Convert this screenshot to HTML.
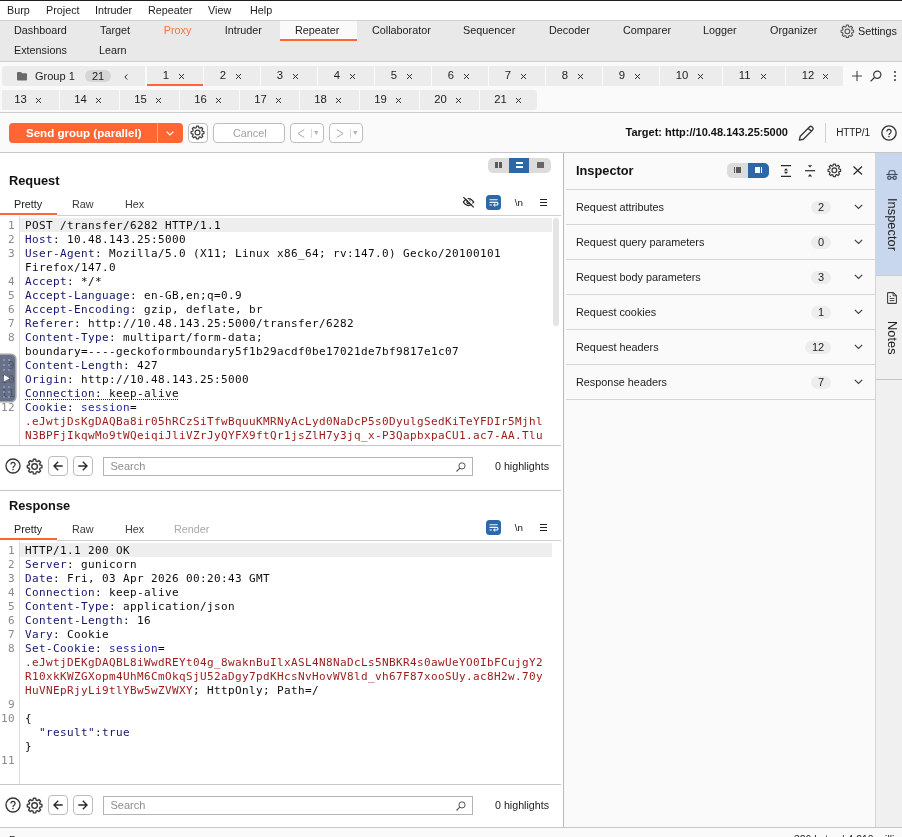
<!DOCTYPE html>
<html lang="en"><head><meta charset="utf-8"><title>Burp Suite Professional - Repeater</title>
<style>
html,body{margin:0;padding:0}
body{width:902px;height:837px;overflow:hidden;position:relative;will-change:transform;background:#fafafa;font-family:"Liberation Sans",sans-serif;font-size:10.8px;color:#1c1c1c}
.a{position:absolute}
.t{position:absolute;white-space:nowrap;line-height:14px;height:14px}
.b{font-weight:bold}
.hd{position:absolute;white-space:nowrap;font-weight:bold;font-size:12.8px;line-height:16px;color:#111}
.ln{position:absolute;background:#c6c6c6}
.stab{position:absolute;background:#ececec;height:20px}
.x{position:absolute;width:7px;height:7px}
.btn{position:absolute;box-sizing:border-box;border:1px solid #bdbdbd;border-radius:4px;background:#fff}
.mono{font-family:"DejaVu Sans Mono","Liberation Mono",monospace;font-size:11px;letter-spacing:0.377px;line-height:14px;white-space:pre;position:absolute;color:#0c0c0c}
.num{font-family:"DejaVu Sans Mono","Liberation Mono",monospace;font-size:11px;letter-spacing:0.377px;line-height:14px;position:absolute;left:0;width:15px;text-align:right;color:#8a8a8a}
.hn{color:#14146c}
.cv{color:#9a1919}
.pn{color:#2424a6}
.pill{position:absolute;background:#ededed;border-radius:7px;height:13px;line-height:13px;text-align:center}
svg{position:absolute;overflow:visible}
</style></head>
<body>
<div class="a" style="left:0px;top:1px;width:902px;height:19px;background:#ffffff;"></div>
<div class="a" style="left:0px;top:0px;width:902px;height:1px;background:#1f1f1f;"></div>
<div class="t " style="left:7px;top:2.5px;">Burp</div>
<div class="t " style="left:46px;top:2.5px;">Project</div>
<div class="t " style="left:95px;top:2.5px;">Intruder</div>
<div class="t " style="left:148px;top:2.5px;">Repeater</div>
<div class="t " style="left:208px;top:2.5px;">View</div>
<div class="t " style="left:250px;top:2.5px;">Help</div>
<div class="a" style="left:0px;top:20px;width:902px;height:41px;background:#e9e9e9;"></div>
<div class="a" style="left:0px;top:20px;width:902px;height:1px;background:#d2d2d2;"></div>
<div class="a" style="left:0px;top:61px;width:902px;height:1px;background:#cecece;"></div>
<div class="a" style="left:280px;top:21px;width:77px;height:19px;background:#fafafa;"></div>
<div class="a" style="left:280px;top:39px;width:77px;height:2px;background:#ff6633;"></div>
<div class="t " style="left:14px;top:22.5px;">Dashboard</div>
<div class="t " style="left:100px;top:22.5px;">Target</div>
<div class="t " style="left:163.7px;top:22.5px;color:#f7733f">Proxy</div>
<div class="t " style="left:224.7px;top:22.5px;">Intruder</div>
<div class="t " style="left:295px;top:22.5px;">Repeater</div>
<div class="t " style="left:372px;top:22.5px;">Collaborator</div>
<div class="t " style="left:463px;top:22.5px;">Sequencer</div>
<div class="t " style="left:549px;top:22.5px;">Decoder</div>
<div class="t " style="left:623px;top:22.5px;">Comparer</div>
<div class="t " style="left:703px;top:22.5px;">Logger</div>
<div class="t " style="left:770px;top:22.5px;">Organizer</div>
<div class="t " style="left:14px;top:42.5px;">Extensions</div>
<div class="t " style="left:99px;top:42.5px;">Learn</div>
<div class="t " style="left:858px;top:24px;">Settings</div>
<svg style="left:839.65px;top:23.85px" width="14.71" height="14.71" viewBox="0 0 16 16"><path d="M6.9 1.2h2.2l.35 1.75 1.1.46 1.5-1 1.55 1.55-1 1.5.46 1.1 1.75.35v2.2l-1.75.35-.46 1.1 1 1.5-1.55 1.55-1.5-1-1.1.46-.35 1.75H6.9l-.35-1.75-1.1-.46-1.5 1L2.4 12.1l1-1.5-.46-1.1L1.2 9.1V6.900l1.750-.350.460-1.100-1-1.500L3.950 2.400l1.500 1 1.100-.460z" fill="none" stroke="#4a4a4a" stroke-width="1.09" stroke-linejoin="round"/><circle cx="8" cy="8" r="2.6" fill="none" stroke="#4a4a4a" stroke-width="1.09"/></svg>
<div class="stab" style="left:2px;top:66px;width:143px;border-radius:4px 0 0 4px"></div>
<svg style="left:17px;top:72px" width="10" height="8.6" viewBox="0 0 10 8.6"><path d="M0 1Q0 0 1 0H3.600Q4.200 0 4.600 0.500L5.100 1.200H9Q10 1.200 10 2.200V7.600Q10 8.600 9 8.600H1Q0 8.600 0 7.600z" fill="#6a6a6a"/></svg>
<div class="t " style="left:35px;top:69px;font-size:11px">Group 1</div>
<div class="pill" style="left:85px;top:70px;width:26px;height:12px;line-height:12px;background:#d6d6d6;font-size:11px">21</div>
<svg style="left:124px;top:73.5px" width="4" height="6" viewBox="0 0 4 6"><path d="M3.300 0.500L0.800 3l2.500 2.500" fill="none" stroke="#2a2a2a" stroke-width="1"/></svg>
<div class="stab" style="left:147px;top:66px;width:56px;"></div>
<div class="a" style="left:147px;top:84px;width:56px;height:2px;background:#ff6633;"></div>
<div class="t " style="left:162.7px;top:68px;font-size:11.3px">1</div>
<svg class="x" style="left:178.0px;top:73.0px" width="7" height="7" viewBox="0 0 7 7"><path d="M1 1L6 6M6 1L1 6" stroke="#262626" stroke-width="0.95" fill="none"/></svg>
<div class="stab" style="left:204px;top:66px;width:56px;"></div>
<div class="t " style="left:219.7px;top:68px;font-size:11.3px">2</div>
<svg class="x" style="left:235.0px;top:73.0px" width="7" height="7" viewBox="0 0 7 7"><path d="M1 1L6 6M6 1L1 6" stroke="#262626" stroke-width="0.95" fill="none"/></svg>
<div class="stab" style="left:261px;top:66px;width:56px;"></div>
<div class="t " style="left:276.7px;top:68px;font-size:11.3px">3</div>
<svg class="x" style="left:292.0px;top:73.0px" width="7" height="7" viewBox="0 0 7 7"><path d="M1 1L6 6M6 1L1 6" stroke="#262626" stroke-width="0.95" fill="none"/></svg>
<div class="stab" style="left:318px;top:66px;width:56px;"></div>
<div class="t " style="left:333.7px;top:68px;font-size:11.3px">4</div>
<svg class="x" style="left:349.0px;top:73.0px" width="7" height="7" viewBox="0 0 7 7"><path d="M1 1L6 6M6 1L1 6" stroke="#262626" stroke-width="0.95" fill="none"/></svg>
<div class="stab" style="left:375px;top:66px;width:56px;"></div>
<div class="t " style="left:390.7px;top:68px;font-size:11.3px">5</div>
<svg class="x" style="left:406.0px;top:73.0px" width="7" height="7" viewBox="0 0 7 7"><path d="M1 1L6 6M6 1L1 6" stroke="#262626" stroke-width="0.95" fill="none"/></svg>
<div class="stab" style="left:432px;top:66px;width:56px;"></div>
<div class="t " style="left:447.7px;top:68px;font-size:11.3px">6</div>
<svg class="x" style="left:463.0px;top:73.0px" width="7" height="7" viewBox="0 0 7 7"><path d="M1 1L6 6M6 1L1 6" stroke="#262626" stroke-width="0.95" fill="none"/></svg>
<div class="stab" style="left:489px;top:66px;width:56px;"></div>
<div class="t " style="left:504.7px;top:68px;font-size:11.3px">7</div>
<svg class="x" style="left:520.0px;top:73.0px" width="7" height="7" viewBox="0 0 7 7"><path d="M1 1L6 6M6 1L1 6" stroke="#262626" stroke-width="0.95" fill="none"/></svg>
<div class="stab" style="left:546px;top:66px;width:56px;"></div>
<div class="t " style="left:561.7px;top:68px;font-size:11.3px">8</div>
<svg class="x" style="left:577.0px;top:73.0px" width="7" height="7" viewBox="0 0 7 7"><path d="M1 1L6 6M6 1L1 6" stroke="#262626" stroke-width="0.95" fill="none"/></svg>
<div class="stab" style="left:603px;top:66px;width:56px;"></div>
<div class="t " style="left:618.7px;top:68px;font-size:11.3px">9</div>
<svg class="x" style="left:634.0px;top:73.0px" width="7" height="7" viewBox="0 0 7 7"><path d="M1 1L6 6M6 1L1 6" stroke="#262626" stroke-width="0.95" fill="none"/></svg>
<div class="stab" style="left:660px;top:66px;width:62px;"></div>
<div class="t " style="left:675.7px;top:68px;font-size:11.3px">10</div>
<svg class="x" style="left:697.0px;top:73.0px" width="7" height="7" viewBox="0 0 7 7"><path d="M1 1L6 6M6 1L1 6" stroke="#262626" stroke-width="0.95" fill="none"/></svg>
<div class="stab" style="left:723px;top:66px;width:62px;"></div>
<div class="t " style="left:738.7px;top:68px;font-size:11.3px">11</div>
<svg class="x" style="left:760.0px;top:73.0px" width="7" height="7" viewBox="0 0 7 7"><path d="M1 1L6 6M6 1L1 6" stroke="#262626" stroke-width="0.95" fill="none"/></svg>
<div class="stab" style="left:786px;top:66px;width:57px;"></div>
<div class="t " style="left:801.7px;top:68px;font-size:11.3px">12</div>
<svg class="x" style="left:822.0px;top:73.0px" width="7" height="7" viewBox="0 0 7 7"><path d="M1 1L6 6M6 1L1 6" stroke="#262626" stroke-width="0.95" fill="none"/></svg>
<div class="stab" style="left:2px;top:90px;width:56.5px;height:19.5px;"></div>
<div class="t " style="left:14.3px;top:92px;font-size:11.3px">13</div>
<svg class="x" style="left:35.0px;top:97.0px" width="7" height="7" viewBox="0 0 7 7"><path d="M1 1L6 6M6 1L1 6" stroke="#262626" stroke-width="0.95" fill="none"/></svg>
<div class="stab" style="left:59.5px;top:90px;width:59.0px;height:19.5px;"></div>
<div class="t " style="left:74.3px;top:92px;font-size:11.3px">14</div>
<svg class="x" style="left:95.0px;top:97.0px" width="7" height="7" viewBox="0 0 7 7"><path d="M1 1L6 6M6 1L1 6" stroke="#262626" stroke-width="0.95" fill="none"/></svg>
<div class="stab" style="left:119.5px;top:90px;width:59.0px;height:19.5px;"></div>
<div class="t " style="left:134.3px;top:92px;font-size:11.3px">15</div>
<svg class="x" style="left:155.0px;top:97.0px" width="7" height="7" viewBox="0 0 7 7"><path d="M1 1L6 6M6 1L1 6" stroke="#262626" stroke-width="0.95" fill="none"/></svg>
<div class="stab" style="left:179.5px;top:90px;width:59.0px;height:19.5px;"></div>
<div class="t " style="left:194.3px;top:92px;font-size:11.3px">16</div>
<svg class="x" style="left:215.0px;top:97.0px" width="7" height="7" viewBox="0 0 7 7"><path d="M1 1L6 6M6 1L1 6" stroke="#262626" stroke-width="0.95" fill="none"/></svg>
<div class="stab" style="left:239.5px;top:90px;width:59.0px;height:19.5px;"></div>
<div class="t " style="left:254.3px;top:92px;font-size:11.3px">17</div>
<svg class="x" style="left:275.0px;top:97.0px" width="7" height="7" viewBox="0 0 7 7"><path d="M1 1L6 6M6 1L1 6" stroke="#262626" stroke-width="0.95" fill="none"/></svg>
<div class="stab" style="left:299.5px;top:90px;width:59.0px;height:19.5px;"></div>
<div class="t " style="left:314.3px;top:92px;font-size:11.3px">18</div>
<svg class="x" style="left:335.0px;top:97.0px" width="7" height="7" viewBox="0 0 7 7"><path d="M1 1L6 6M6 1L1 6" stroke="#262626" stroke-width="0.95" fill="none"/></svg>
<div class="stab" style="left:359.5px;top:90px;width:59.0px;height:19.5px;"></div>
<div class="t " style="left:374.3px;top:92px;font-size:11.3px">19</div>
<svg class="x" style="left:395.0px;top:97.0px" width="7" height="7" viewBox="0 0 7 7"><path d="M1 1L6 6M6 1L1 6" stroke="#262626" stroke-width="0.95" fill="none"/></svg>
<div class="stab" style="left:419.5px;top:90px;width:59.0px;height:19.5px;"></div>
<div class="t " style="left:434.3px;top:92px;font-size:11.3px">20</div>
<svg class="x" style="left:455.0px;top:97.0px" width="7" height="7" viewBox="0 0 7 7"><path d="M1 1L6 6M6 1L1 6" stroke="#262626" stroke-width="0.95" fill="none"/></svg>
<div class="stab" style="left:479.5px;top:90px;width:57.5px;height:19.5px;border-radius:0 4px 4px 0"></div>
<div class="t " style="left:494.3px;top:92px;font-size:11.3px">21</div>
<svg class="x" style="left:515.0px;top:97.0px" width="7" height="7" viewBox="0 0 7 7"><path d="M1 1L6 6M6 1L1 6" stroke="#262626" stroke-width="0.95" fill="none"/></svg>
<svg style="left:852px;top:71px" width="10" height="10" viewBox="0 0 10 10"><path d="M5 0v10M0 5h10" stroke="#444" stroke-width="1.1"/></svg>
<svg style="left:870px;top:70px" width="12" height="12" viewBox="0 0 12 12"><circle cx="7.3" cy="4.7" r="3.6" fill="none" stroke="#3a3a3a" stroke-width="1.2"/><path d="M4.7 7.3L0.6 11.4" stroke="#3a3a3a" stroke-width="1.3"/></svg>
<div class="a" style="left:894px;top:71px;width:2px;height:2px;background:#3a3a3a;border-radius:1px"></div>
<div class="a" style="left:894px;top:75px;width:2px;height:2px;background:#3a3a3a;border-radius:1px"></div>
<div class="a" style="left:894px;top:79px;width:2px;height:2px;background:#3a3a3a;border-radius:1px"></div>
<div class="a" style="left:0px;top:112px;width:902px;height:1px;background:#cdcdcd;"></div>
<div class="a" style="left:9px;top:123px;width:174px;height:20px;background:#ff6633;border-radius:4px"></div>
<div class="a" style="left:157px;top:123px;width:1px;height:20px;background:rgba(255,255,255,.38);"></div>
<div class="t b" style="left:26px;top:126px;color:#fff;font-size:11.55px">Send group (parallel)</div>
<svg style="left:166px;top:131px" width="8" height="5" viewBox="0 0 8 5"><path d="M0.7 0.7L4 4 7.3 0.7" fill="none" stroke="#fff" stroke-width="1.2"/></svg>
<div class="btn" style="left:188px;top:123px;width:20px;height:20px"></div>
<svg style="left:190.47px;top:125.47px" width="15.06" height="15.06" viewBox="0 0 16 16"><path d="M6.9 1.2h2.2l.35 1.75 1.1.46 1.5-1 1.55 1.55-1 1.5.46 1.1 1.75.35v2.2l-1.75.35-.46 1.1 1 1.5-1.55 1.55-1.5-1-1.1.46-.35 1.75H6.9l-.35-1.75-1.1-.46-1.5 1L2.4 12.1l1-1.5-.46-1.1L1.2 9.1V6.900l1.750-.350.460-1.100-1-1.500L3.950 2.400l1.500 1 1.100-.460z" fill="none" stroke="#3a3a3a" stroke-width="1.27" stroke-linejoin="round"/><circle cx="8" cy="8" r="2.6" fill="none" stroke="#3a3a3a" stroke-width="1.27"/></svg>
<div class="btn" style="left:213px;top:123px;width:72px;height:20px"></div>
<div class="t " style="left:233px;top:126px;color:#a2a2a2;font-size:10.8px">Cancel</div>
<div class="btn" style="left:290px;top:123px;width:33.5px;height:20px"></div>
<svg style="left:297px;top:128.5px" width="8" height="9" viewBox="0 0 8 9"><path d="M7.300 0.500L0.900 4.500 7.300 8.500" fill="none" stroke="#aaa" stroke-width="1"/></svg>
<div class="a" style="left:311px;top:128.5px;width:1px;height:9px;background:#d8d8d8;"></div>
<svg style="left:314.2px;top:131px" width="4.500" height="4" viewBox="0 0 4.500 4"><path d="M0 0h4.500L2.250 4z" fill="#b4b4b4"/></svg>
<div class="btn" style="left:329px;top:123px;width:33.5px;height:20px"></div>
<svg style="left:336px;top:128.5px" width="8" height="9" viewBox="0 0 8 9"><path d="M0.700 0.500L7.100 4.500 0.700 8.500" fill="none" stroke="#aaa" stroke-width="1"/></svg>
<div class="a" style="left:350px;top:128.5px;width:1px;height:9px;background:#d8d8d8;"></div>
<svg style="left:353.2px;top:131px" width="4.500" height="4" viewBox="0 0 4.500 4"><path d="M0 0h4.500L2.250 4z" fill="#b4b4b4"/></svg>
<div class="t b" style="left:625.5px;top:124.5px;font-size:11px;color:#111">Target: http://10.48.143.25:5000</div>
<svg style="left:798.1px;top:125px" width="16.5" height="16.5" viewBox="0 0 16 16"><path d="M1.300 14.700L2.200 10.800L11.100 1.900Q12.400 0.600 13.700 1.900L14.100 2.300Q15.400 3.600 14.100 4.900L5.200 13.800ZM9.900 3.100L12.900 6.100" fill="none" stroke="#3a3a3a" stroke-width="1.350" stroke-linejoin="round"/></svg>
<div class="a" style="left:825px;top:123px;width:1px;height:20px;background:#d0d0d0;"></div>
<div class="t " style="left:836.3px;top:125.5px;font-size:10px;letter-spacing:-0.15px">HTTP/1</div>
<svg style="left:880.5px;top:125.4px" width="16" height="16" viewBox="0 0 16 16"><circle cx="8" cy="8" r="7.15" fill="none" stroke="#333" stroke-width="1.35"/><path d="M5.9 6.4a2.1 2.1 0 1 1 3.2 1.8c-.7.45-1.1.8-1.1 1.7" fill="none" stroke="#333" stroke-width="1.25"/><circle cx="8" cy="11.6" r=".8" fill="#3a3a3a"/></svg>
<div class="a" style="left:0px;top:152px;width:902px;height:1px;background:#c6c6c6;"></div>
<div class="a" style="left:0px;top:153px;width:563px;height:675px;background:#ffffff;"></div>
<div class="hd" style="left:9px;top:172.5px">Request</div>
<div class="t " style="left:14px;top:196.5px;color:#1c1c1c">Pretty</div>
<div class="t " style="left:72px;top:196.5px;color:#3a3a3a">Raw</div>
<div class="t " style="left:125px;top:196.5px;color:#3a3a3a">Hex</div>
<div class="a" style="left:0px;top:213px;width:57px;height:2px;background:#ff6633;"></div>
<div class="a" style="left:57px;top:214.5px;width:504px;height:1px;background:#d0d0d0;"></div>
<svg style="left:462px;top:196.2px" width="13" height="12" viewBox="0 0 13 12"><path d="M1.300 6Q3.600 2.500 6.500 2.500T11.700 6Q9.400 9.500 6.500 9.500T1.300 6z" fill="none" stroke="#222" stroke-width="1.25" stroke-linejoin="round"/><circle cx="6.500" cy="6" r="1.700" fill="none" stroke="#222" stroke-width="1.100"/><path d="M2.400 0.200L12.600 10.400" stroke="#fff" stroke-width="1.300"/><path d="M1.400 1.100L11.700 11.400" stroke="#222" stroke-width="1.250"/></svg>
<div class="a" style="left:486px;top:195px;width:15px;height:15px;background:#2d67a8;border-radius:3.5px"></div>
<svg style="left:486px;top:195px" width="15" height="15" viewBox="0 0 15 15"><path d="M3.500 4.750h8.200M3.500 7.400h7.200a1.300 1.300 0 0 1 0 2.600H8.200M3.500 10h2.400" fill="none" stroke="#f2f6fb" stroke-width="1.150"/><path d="M9.200 8.700L7.700 10l1.500 1.300" fill="none" stroke="#f2f6fb" stroke-width="1.050"/></svg>
<div class="t " style="left:514.8px;top:195.5px;font-size:9.8px;color:#111">\n</div>
<div class="a" style="left:540px;top:199.2px;width:7.2px;height:1.3px;background:#222;"></div>
<div class="a" style="left:540px;top:201.95px;width:7.2px;height:1.3px;background:#222;"></div>
<div class="a" style="left:540px;top:204.7px;width:7.2px;height:1.3px;background:#222;"></div>
<div class="a" style="left:0px;top:216px;width:561px;height:229px;background:#ffffff;"></div>
<div class="a" style="left:19px;top:216px;width:1px;height:229px;background:#dcdcdc;"></div>
<div class="a" style="left:20px;top:218px;width:532px;height:14px;background:#eeeeee;"></div>
<div class="a" style="left:0px;top:445px;width:561px;height:1px;background:#c6c6c6;"></div>
<div class="hd" style="left:9px;top:497.5px">Response</div>
<div class="t " style="left:14px;top:521.5px;color:#1c1c1c">Pretty</div>
<div class="t " style="left:72px;top:521.5px;color:#3a3a3a">Raw</div>
<div class="t " style="left:125px;top:521.5px;color:#3a3a3a">Hex</div>
<div class="t " style="left:174px;top:521.5px;color:#a9a9a9">Render</div>
<div class="a" style="left:0px;top:538px;width:57px;height:2px;background:#ff6633;"></div>
<div class="a" style="left:57px;top:539.5px;width:504px;height:1px;background:#d0d0d0;"></div>
<div class="a" style="left:486px;top:520px;width:15px;height:15px;background:#2d67a8;border-radius:3.5px"></div>
<svg style="left:486px;top:520px" width="15" height="15" viewBox="0 0 15 15"><path d="M3.500 4.750h8.200M3.500 7.400h7.200a1.300 1.300 0 0 1 0 2.600H8.200M3.500 10h2.400" fill="none" stroke="#f2f6fb" stroke-width="1.150"/><path d="M9.200 8.700L7.700 10l1.500 1.300" fill="none" stroke="#f2f6fb" stroke-width="1.050"/></svg>
<div class="t " style="left:514.8px;top:520.5px;font-size:9.8px;color:#111">\n</div>
<div class="a" style="left:540px;top:524.2px;width:7.2px;height:1.3px;background:#222;"></div>
<div class="a" style="left:540px;top:526.95px;width:7.2px;height:1.3px;background:#222;"></div>
<div class="a" style="left:540px;top:529.7px;width:7.2px;height:1.3px;background:#222;"></div>
<div class="a" style="left:0px;top:541px;width:561px;height:243px;background:#ffffff;"></div>
<div class="a" style="left:19px;top:541px;width:1px;height:243px;background:#dcdcdc;"></div>
<div class="a" style="left:20px;top:543px;width:532px;height:14px;background:#eeeeee;"></div>
<div class="a" style="left:0px;top:784px;width:561px;height:1px;background:#c6c6c6;"></div>
<div class="a" style="left:488px;top:158px;width:63px;height:15px;background:#dcdcdc;border-radius:5px"></div>
<div class="a" style="left:509px;top:158px;width:20px;height:15px;background:#2d67a8;"></div>
<div class="a" style="left:495px;top:162px;width:2.5px;height:6px;background:#5a5a5a;"></div>
<div class="a" style="left:499.4px;top:162px;width:2.5px;height:6px;background:#5a5a5a;"></div>
<div class="a" style="left:515.5px;top:162px;width:7.5px;height:2.2px;background:#fff;"></div>
<div class="a" style="left:515.5px;top:165.8px;width:7.5px;height:2.2px;background:#fff;"></div>
<div class="a" style="left:536.8px;top:162px;width:7.5px;height:6px;background:#666;"></div>
<div class="a" style="left:553px;top:218px;width:6px;height:107.5px;background:#e4e4e4;border-radius:3px"></div>
<div class="a" style="left:0;top:216px;width:561px;height:229px;overflow:hidden">
<div class="a" style="left:0;top:-216px;width:561px;height:500px">
<div class="num" style="top:219px">1</div>
<div class="mono" style="left:25px;top:219px">POST /transfer/6282 HTTP/1.1</div>
<div class="num" style="top:233px">2</div>
<div class="mono" style="left:25px;top:233px"><span class="hn">Host</span>: 10.48.143.25:5000</div>
<div class="num" style="top:247px">3</div>
<div class="mono" style="left:25px;top:247px"><span class="hn">User-Agent</span>: Mozilla/5.0 (X11; Linux x86_64; rv:147.0) Gecko/20100101</div>
<div class="mono" style="left:25px;top:261px">Firefox/147.0</div>
<div class="num" style="top:275px">4</div>
<div class="mono" style="left:25px;top:275px"><span class="hn">Accept</span>: */*</div>
<div class="num" style="top:289px">5</div>
<div class="mono" style="left:25px;top:289px"><span class="hn">Accept-Language</span>: en-GB,en;q=0.9</div>
<div class="num" style="top:303px">6</div>
<div class="mono" style="left:25px;top:303px"><span class="hn">Accept-Encoding</span>: gzip, deflate, br</div>
<div class="num" style="top:317px">7</div>
<div class="mono" style="left:25px;top:317px"><span class="hn">Referer</span>: http://10.48.143.25:5000/transfer/6282</div>
<div class="num" style="top:331px">8</div>
<div class="mono" style="left:25px;top:331px"><span class="hn">Content-Type</span>: multipart/form-data;</div>
<div class="mono" style="left:25px;top:345px">boundary=----geckoformboundary5f1b29acdf0be17021de7bf9817e1c07</div>
<div class="num" style="top:359px">9</div>
<div class="mono" style="left:25px;top:359px"><span class="hn">Content-Length</span>: 427</div>
<div class="num" style="top:373px">10</div>
<div class="mono" style="left:25px;top:373px"><span class="hn">Origin</span>: http://10.48.143.25:5000</div>
<div class="num" style="top:387px">11</div>
<div class="mono" style="left:25px;top:387px"><span class="hn">Connection</span>: keep-alive</div>
<div class="num" style="top:401px">12</div>
<div class="mono" style="left:25px;top:401px"><span class="hn">Cookie</span>: <span class="pn">session</span>=</div>
<div class="mono" style="left:25px;top:415px"><span class="cv">.eJwtjDsKgDAQBa8ir05hRCzSiTfwBquuKMRNyAcLyd0NaDcP5s0DyulgSedKiTeYFDIr5Mjhl</span></div>
<div class="mono" style="left:25px;top:429px"><span class="cv">N3BPFjIkqwMo9tWQeiqiJliVZrJyQYFX9ftQr1jsZlH7y3jq_x-P3QapbxpaCU1.ac7-AA.Tlu</span></div>
<div class="a" style="left:25px;top:399px;width:154px;height:1px;background:repeating-linear-gradient(90deg,#17176b 0 1px,transparent 1px 2px)"></div>
</div></div>
<div class="num" style="top:544px">1</div>
<div class="mono" style="left:25px;top:544px">HTTP/1.1 200 OK</div>
<div class="num" style="top:558px">2</div>
<div class="mono" style="left:25px;top:558px"><span class="hn">Server</span>: gunicorn</div>
<div class="num" style="top:572px">3</div>
<div class="mono" style="left:25px;top:572px"><span class="hn">Date</span>: Fri, 03 Apr 2026 00:20:43 GMT</div>
<div class="num" style="top:586px">4</div>
<div class="mono" style="left:25px;top:586px"><span class="hn">Connection</span>: keep-alive</div>
<div class="num" style="top:600px">5</div>
<div class="mono" style="left:25px;top:600px"><span class="hn">Content-Type</span>: application/json</div>
<div class="num" style="top:614px">6</div>
<div class="mono" style="left:25px;top:614px"><span class="hn">Content-Length</span>: 16</div>
<div class="num" style="top:628px">7</div>
<div class="mono" style="left:25px;top:628px"><span class="hn">Vary</span>: Cookie</div>
<div class="num" style="top:642px">8</div>
<div class="mono" style="left:25px;top:642px"><span class="hn">Set-Cookie</span>: <span class="pn">session</span>=</div>
<div class="mono" style="left:25px;top:656px"><span class="cv">.eJwtjDEKgDAQBL8iWwdREYt04g_8waknBuIlxASL4N8NaDcLs5NBKR4s0awUeYO0IbFCujgY2</span></div>
<div class="mono" style="left:25px;top:670px"><span class="cv">R10xkKWZGXopm4UhM6CmOkqSjU52aDgy7pdKHcsNvHovWV8ld_vh67F87xooSUy.ac8H2w.70y</span></div>
<div class="mono" style="left:25px;top:684px"><span class="cv">HuVNEpRjyLi9tlYBw5wZVWXY</span>; HttpOnly; Path=/</div>
<div class="num" style="top:698px">9</div>
<div class="mono" style="left:25px;top:698px"></div>
<div class="num" style="top:712px">10</div>
<div class="mono" style="left:25px;top:712px">{</div>
<div class="mono" style="left:25px;top:726px">  <span class="hn">"result"</span>:<span class="hn">true</span></div>
<div class="mono" style="left:25px;top:740px">}</div>
<div class="num" style="top:754px">11</div>
<div class="mono" style="left:25px;top:754px"></div>
<div class="a" style="left:0;top:354.7px;width:14.6px;height:46.6px;background:rgba(58,68,96,.76);border-radius:0 4px 4px 0;box-shadow:0 0 0 1.6px rgba(84,90,104,.55)"></div>
<svg style="left:4px;top:375px" width="6" height="7" viewBox="0 0 6 7"><path d="M0 0l5.600 3.300L0 6.600z" fill="#fff"/></svg>
<div class="a" style="left:3px;top:359px;width:1.5px;height:1.5px;background:rgba(140,158,196,.75);"></div>
<div class="a" style="left:8px;top:359px;width:1.5px;height:1.5px;background:rgba(140,158,196,.75);"></div>
<div class="a" style="left:3px;top:364px;width:1.5px;height:1.5px;background:rgba(140,158,196,.75);"></div>
<div class="a" style="left:8px;top:364px;width:1.5px;height:1.5px;background:rgba(140,158,196,.75);"></div>
<div class="a" style="left:3px;top:369px;width:1.5px;height:1.5px;background:rgba(140,158,196,.75);"></div>
<div class="a" style="left:8px;top:369px;width:1.5px;height:1.5px;background:rgba(140,158,196,.75);"></div>
<div class="a" style="left:3px;top:386px;width:1.5px;height:1.5px;background:rgba(140,158,196,.75);"></div>
<div class="a" style="left:8px;top:386px;width:1.5px;height:1.5px;background:rgba(140,158,196,.75);"></div>
<div class="a" style="left:3px;top:391px;width:1.5px;height:1.5px;background:rgba(140,158,196,.75);"></div>
<div class="a" style="left:8px;top:391px;width:1.5px;height:1.5px;background:rgba(140,158,196,.75);"></div>
<div class="a" style="left:3px;top:396px;width:1.5px;height:1.5px;background:rgba(140,158,196,.75);"></div>
<div class="a" style="left:8px;top:396px;width:1.5px;height:1.5px;background:rgba(140,158,196,.75);"></div>
<svg style="left:4.5px;top:458.2px" width="16" height="16" viewBox="0 0 16 16"><circle cx="8" cy="8" r="7" fill="none" stroke="#333" stroke-width="1.35"/><path d="M5.9 6.4a2.1 2.1 0 1 1 3.2 1.8c-.7.45-1.1.8-1.1 1.7" fill="none" stroke="#333" stroke-width="1.25"/><circle cx="8" cy="11.6" r=".8" fill="#3a3a3a"/></svg>
<svg style="left:25.71px;top:457.51px" width="17.18" height="17.18" viewBox="0 0 16 16"><path d="M6.9 1.2h2.2l.35 1.75 1.1.46 1.5-1 1.55 1.55-1 1.5.46 1.1 1.75.35v2.2l-1.75.35-.46 1.1 1 1.5-1.55 1.55-1.5-1-1.1.46-.35 1.75H6.9l-.35-1.75-1.1-.46-1.5 1L2.4 12.1l1-1.5-.46-1.1L1.2 9.1V6.900l1.750-.350.460-1.100-1-1.500L3.950 2.400l1.500 1 1.100-.460z" fill="none" stroke="#3a3a3a" stroke-width="1.30" stroke-linejoin="round"/><circle cx="8" cy="8" r="2.6" fill="none" stroke="#3a3a3a" stroke-width="1.30"/></svg>
<div class="btn" style="left:48px;top:456px;width:20px;height:20px"></div>
<div class="btn" style="left:73px;top:456px;width:20px;height:20px"></div>
<svg style="left:48px;top:456px" width="20" height="20" viewBox="0 0 20 20"><path d="M14.700 10H6.400M10.200 5.800L6 10l4.200 4.200" fill="none" stroke="#2a2a2a" stroke-width="1.4"/></svg>
<svg style="left:73px;top:456px" width="20" height="20" viewBox="0 0 20 20"><path d="M5.300 10h8.300M9.800 5.800L14 10l-4.200 4.200" fill="none" stroke="#2a2a2a" stroke-width="1.4"/></svg>
<div class="a" style="left:103px;top:457px;width:370px;height:19px;box-sizing:border-box;border:1px solid #b4b4b4;background:#fff"></div>
<div class="t " style="left:110.5px;top:458.5px;color:#8e8e8e;font-size:11px">Search</div>
<svg style="left:456px;top:462px" width="10" height="10" viewBox="0 0 10 10"><circle cx="6" cy="3.900" r="3.100" fill="none" stroke="#555" stroke-width="1"/><path d="M3.800 6.100L0.500 9.500" stroke="#555" stroke-width="1.100"/></svg>
<div class="t " style="left:495px;top:458.5px;font-size:10.7px">0 highlights</div>
<div class="a" style="left:0px;top:490px;width:561px;height:1px;background:#c6c6c6;"></div>
<svg style="left:4.5px;top:797.2px" width="16" height="16" viewBox="0 0 16 16"><circle cx="8" cy="8" r="7" fill="none" stroke="#333" stroke-width="1.35"/><path d="M5.9 6.4a2.1 2.1 0 1 1 3.2 1.8c-.7.45-1.1.8-1.1 1.7" fill="none" stroke="#333" stroke-width="1.25"/><circle cx="8" cy="11.6" r=".8" fill="#3a3a3a"/></svg>
<svg style="left:25.71px;top:796.51px" width="17.18" height="17.18" viewBox="0 0 16 16"><path d="M6.9 1.2h2.2l.35 1.75 1.1.46 1.5-1 1.55 1.55-1 1.5.46 1.1 1.75.35v2.2l-1.75.35-.46 1.1 1 1.5-1.55 1.55-1.5-1-1.1.46-.35 1.75H6.9l-.35-1.75-1.1-.46-1.5 1L2.4 12.1l1-1.5-.46-1.1L1.2 9.1V6.900l1.750-.350.460-1.100-1-1.500L3.950 2.400l1.500 1 1.100-.460z" fill="none" stroke="#3a3a3a" stroke-width="1.30" stroke-linejoin="round"/><circle cx="8" cy="8" r="2.6" fill="none" stroke="#3a3a3a" stroke-width="1.30"/></svg>
<div class="btn" style="left:48px;top:795px;width:20px;height:20px"></div>
<div class="btn" style="left:73px;top:795px;width:20px;height:20px"></div>
<svg style="left:48px;top:795px" width="20" height="20" viewBox="0 0 20 20"><path d="M14.700 10H6.400M10.200 5.800L6 10l4.200 4.200" fill="none" stroke="#2a2a2a" stroke-width="1.4"/></svg>
<svg style="left:73px;top:795px" width="20" height="20" viewBox="0 0 20 20"><path d="M5.300 10h8.300M9.800 5.800L14 10l-4.200 4.200" fill="none" stroke="#2a2a2a" stroke-width="1.4"/></svg>
<div class="a" style="left:103px;top:796px;width:370px;height:19px;box-sizing:border-box;border:1px solid #b4b4b4;background:#fff"></div>
<div class="t " style="left:110.5px;top:797.5px;color:#8e8e8e;font-size:11px">Search</div>
<svg style="left:456px;top:801px" width="10" height="10" viewBox="0 0 10 10"><circle cx="6" cy="3.900" r="3.100" fill="none" stroke="#555" stroke-width="1"/><path d="M3.800 6.100L0.500 9.500" stroke="#555" stroke-width="1.100"/></svg>
<div class="t " style="left:495px;top:797.5px;font-size:10.7px">0 highlights</div>
<div class="a" style="left:0px;top:827px;width:902px;height:1px;background:#c6c6c6;"></div>
<div class="a" style="left:0px;top:828px;width:902px;height:9px;background:#fafafa;"></div>
<div class="t " style="left:9px;top:832.5px;font-size:11px">Done</div>
<div class="t " style="left:794px;top:832.5px;font-size:10.4px">326 bytes | 4,210 millis</div>
<div class="a" style="left:563px;top:153px;width:1px;height:674px;background:#b9b9b9;"></div>
<div class="hd" style="left:576px;top:162.5px">Inspector</div>
<div class="a" style="left:727px;top:163px;width:42px;height:15px;background:#dcdcdc;border-radius:5px"></div>
<div class="a" style="left:748px;top:163px;width:21px;height:15px;background:#2d67a8;border-radius:0 5px 5px 0"></div>
<div class="a" style="left:733.7px;top:167px;width:1.3px;height:6px;background:#5a5a5a;"></div>
<div class="a" style="left:736px;top:167px;width:5.2px;height:6px;background:#5a5a5a;"></div>
<div class="a" style="left:754.7px;top:167px;width:5.7px;height:6px;background:#fff;"></div>
<div class="a" style="left:761.2px;top:167px;width:1.3px;height:6px;background:#fff;"></div>
<svg style="left:781px;top:165px" width="10" height="12" viewBox="0 0 10 12"><path d="M0 0.600h10M0 11.400h10" stroke="#2a2a2a" stroke-width="1.2"/><path d="M5 3.200l2.100 2.400H2.900zM5 9.100l2.100-2.400H2.900z" fill="#2a2a2a"/></svg>
<svg style="left:805px;top:165px" width="10" height="12" viewBox="0 0 10 12"><path d="M0 5.700h10" stroke="#2a2a2a" stroke-width="1.2"/><path d="M5 2.600l2.100-2.300H2.900zM5 9.100l2.100 2.300H2.900z" fill="#2a2a2a"/></svg>
<svg style="left:826.65px;top:163.45px" width="14.71" height="14.71" viewBox="0 0 16 16"><path d="M6.9 1.2h2.2l.35 1.75 1.1.46 1.5-1 1.55 1.55-1 1.5.46 1.1 1.75.35v2.2l-1.75.35-.46 1.1 1 1.5-1.55 1.55-1.5-1-1.1.46-.35 1.75H6.9l-.35-1.75-1.1-.46-1.5 1L2.4 12.1l1-1.5-.46-1.1L1.2 9.1V6.900l1.750-.350.460-1.100-1-1.500L3.950 2.400l1.500 1 1.100-.460z" fill="none" stroke="#3a3a3a" stroke-width="1.31" stroke-linejoin="round"/><circle cx="8" cy="8" r="2.6" fill="none" stroke="#3a3a3a" stroke-width="1.31"/></svg>
<svg style="left:853px;top:166.300px" width="9.500" height="9" viewBox="0 0 9.500 9"><path d="M0.500 0.500L9 8.500M9 0.500L0.500 8.500" stroke="#2a2a2a" stroke-width="1.2"/></svg>
<div class="a" style="left:566px;top:189px;width:309px;height:1px;background:#d6d6d6;"></div>
<div class="t " style="left:576px;top:199.5px;font-size:10.85px">Request attributes</div>
<div class="pill" style="left:811px;top:200.5px;width:20px;font-size:11px">2</div>
<svg style="left:853.6px;top:204.1px" width="9" height="6" viewBox="0 0 9 6"><path d="M0.800 0.900L4.500 4.500 8.200 0.900" fill="none" stroke="#404040" stroke-width="1.2"/></svg>
<div class="a" style="left:566px;top:224px;width:309px;height:1px;background:#d6d6d6;"></div>
<div class="t " style="left:576px;top:234.5px;font-size:10.85px">Request query parameters</div>
<div class="pill" style="left:811px;top:235.5px;width:20px;font-size:11px">0</div>
<svg style="left:853.6px;top:239.1px" width="9" height="6" viewBox="0 0 9 6"><path d="M0.800 0.900L4.500 4.500 8.200 0.900" fill="none" stroke="#404040" stroke-width="1.2"/></svg>
<div class="a" style="left:566px;top:259px;width:309px;height:1px;background:#d6d6d6;"></div>
<div class="t " style="left:576px;top:269.5px;font-size:10.85px">Request body parameters</div>
<div class="pill" style="left:811px;top:270.5px;width:20px;font-size:11px">3</div>
<svg style="left:853.6px;top:274.1px" width="9" height="6" viewBox="0 0 9 6"><path d="M0.800 0.900L4.500 4.500 8.200 0.900" fill="none" stroke="#404040" stroke-width="1.2"/></svg>
<div class="a" style="left:566px;top:294px;width:309px;height:1px;background:#d6d6d6;"></div>
<div class="t " style="left:576px;top:304.5px;font-size:10.85px">Request cookies</div>
<div class="pill" style="left:811px;top:305.5px;width:20px;font-size:11px">1</div>
<svg style="left:853.6px;top:309.1px" width="9" height="6" viewBox="0 0 9 6"><path d="M0.800 0.900L4.500 4.500 8.200 0.900" fill="none" stroke="#404040" stroke-width="1.2"/></svg>
<div class="a" style="left:566px;top:329px;width:309px;height:1px;background:#d6d6d6;"></div>
<div class="t " style="left:576px;top:339.5px;font-size:10.85px">Request headers</div>
<div class="pill" style="left:805px;top:340.5px;width:26px;font-size:11px">12</div>
<svg style="left:853.6px;top:344.1px" width="9" height="6" viewBox="0 0 9 6"><path d="M0.800 0.900L4.500 4.500 8.200 0.900" fill="none" stroke="#404040" stroke-width="1.2"/></svg>
<div class="a" style="left:566px;top:364px;width:309px;height:1px;background:#d6d6d6;"></div>
<div class="t " style="left:576px;top:374.5px;font-size:10.85px">Response headers</div>
<div class="pill" style="left:811px;top:375.5px;width:20px;font-size:11px">7</div>
<svg style="left:853.6px;top:379.1px" width="9" height="6" viewBox="0 0 9 6"><path d="M0.800 0.900L4.500 4.500 8.200 0.900" fill="none" stroke="#404040" stroke-width="1.2"/></svg>
<div class="a" style="left:566px;top:399px;width:309px;height:1px;background:#d6d6d6;"></div>
<div class="a" style="left:875px;top:153px;width:27px;height:674px;background:#f1f0f0;"></div>
<div class="a" style="left:875px;top:153px;width:1px;height:674px;background:#d4d4d4;"></div>
<div class="a" style="left:876px;top:153px;width:26px;height:122px;background:#c8d7ee;"></div>
<div class="a" style="left:876px;top:275px;width:26px;height:1px;background:#c4ccd4;"></div>
<div class="a" style="left:876px;top:379px;width:26px;height:1px;background:#c4c4c4;"></div>
<svg style="left:886px;top:170px" width="12" height="10" viewBox="0 0 12 10"><path d="M2.800 4.300L3.100 1.800Q3.200 0.800 4.200 0.800h3.600Q8.800 0.800 8.900 1.800L9.200 4.300" fill="none" stroke="#454d5c" stroke-width="1.100"/><path d="M0.300 4.500h11.400" stroke="#454d5c" stroke-width="1.150"/><circle cx="3.300" cy="7.700" r="1.600" fill="none" stroke="#454d5c" stroke-width="1.250"/><circle cx="8.700" cy="7.700" r="1.600" fill="none" stroke="#454d5c" stroke-width="1.250"/><path d="M4.900 7.600h2.200" stroke="#454d5c" stroke-width="1.100"/></svg>
<div class="a" style="left:885px;top:198px;width:14px;height:52px;writing-mode:vertical-rl;font-size:12.9px;line-height:14px;white-space:nowrap;color:#1c1c1c">Inspector</div>
<svg style="left:887px;top:292px" width="10" height="12" viewBox="0 0 10 12"><path d="M0.600 1.300q0-.700.700-.700h5l3.100 3.100v7q0 .700-.700.700H1.300q-.700 0-.700-.700z" fill="#fcfcfc" stroke="#3c3c3c" stroke-width="1.100" stroke-linejoin="round"/><path d="M6.100 0.800v3h3" fill="none" stroke="#3c3c3c" stroke-width="1"/><path d="M2.600 6.400h4.800M2.600 8.600h4.800M2.600 4.300h1.500" stroke="#3c3c3c" stroke-width="1"/></svg>
<div class="a" style="left:885px;top:320.500px;width:14px;height:34px;writing-mode:vertical-rl;font-size:12.9px;line-height:14px;white-space:nowrap;color:#1c1c1c">Notes</div>
</body></html>
